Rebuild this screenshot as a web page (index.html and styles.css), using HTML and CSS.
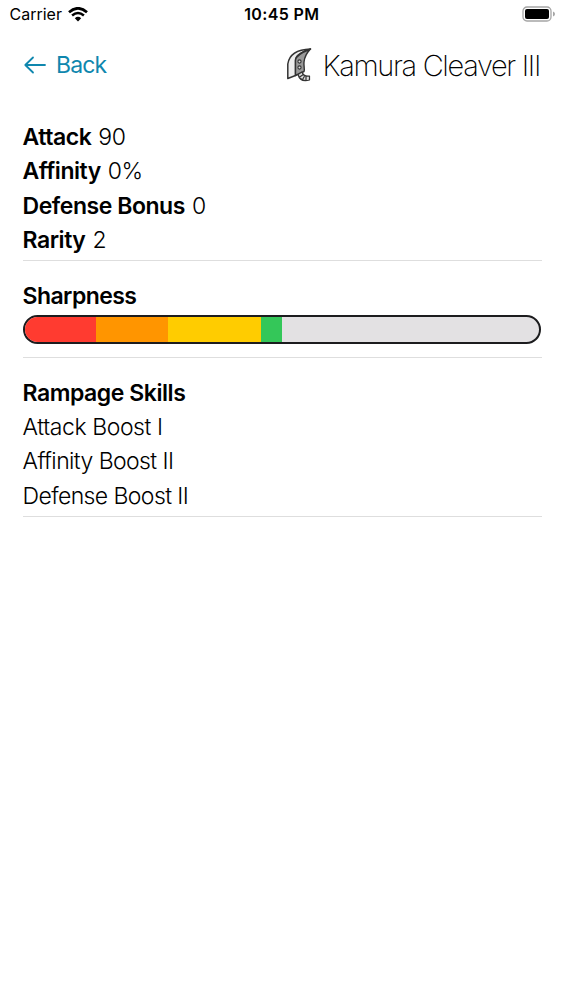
FILE: index.html
```html
<!DOCTYPE html>
<html lang="en">
<head>
  <meta charset="UTF-8">
  <meta name="viewport" content="width=device-width, initial-scale=1.0">
  <title>Kamura Cleaver III</title>
  <link rel="stylesheet" href="styles.css">
</head>
<body>
  <div class="status-bar">
    <div class="carrier">
      <span>Carrier</span>
      <svg class="wifi" width="20" height="15" viewBox="0 0 20 15">
        <path d="M1 5.2 Q10 -2.6 19 5.2" fill="none" stroke="#000" stroke-width="2.7"/>
        <path d="M4.1 8.5 Q10 3.4 15.9 8.5" fill="none" stroke="#000" stroke-width="2.5"/>
        <path d="M6.8 11.3 Q10 8.4 13.2 11.3 L10 14.5 Z" fill="#000"/>
      </svg>
    </div>
    <span class="time">10:45 PM</span>
    <svg class="battery" width="34" height="16" viewBox="0 0 34 16">
      <rect x="1" y="1" width="28" height="14" rx="4" fill="#fff" stroke="#a5a5a5" stroke-width="1.3"/>
      <rect x="3" y="3" width="24" height="10" rx="2" fill="#000"/>
      <path d="M31 5.5 Q33 6.2 33 8 Q33 9.8 31 10.5 Z" fill="#a5a5a5"/>
    </svg>
  </div>

  <header>
    <a class="back" href="#">
      <svg width="22" height="18" viewBox="0 0 22 18" fill="none" stroke="#0f87ae" stroke-width="1.8" stroke-linecap="round" stroke-linejoin="round">
        <path d="M9 1.5 L1.3 9 L9 16.5 M1.3 9 H21"/>
      </svg>
      <span>Back</span>
    </a>
    <div class="title">
      <svg width="28" height="36" viewBox="0 0 28 36" stroke="#333" stroke-linejoin="round">
        <path d="M1.8 31.5 V17 C3 9 9 2.5 24.5 2 C18 4 9 8 9.5 14 V28.5 Z" fill="#eee" stroke-width="1.5"/>
        <path d="M24.5 2 C17 5 10 8 9.5 13 V28.5 L18 24.5 C19 22 17.5 19 18 15 C18.5 10 20.5 6 24.5 2 Z" fill="#999" stroke-width="1.4"/>
        <circle cx="13.5" cy="14.5" r="1.6" fill="#ddd" stroke-width="1.1"/>
        <circle cx="13.5" cy="20.5" r="1.6" fill="#ddd" stroke-width="1.1"/>
        <path d="M12 27.5 L16 25 C17 28.5 19 29.5 23.5 29 V33 C18 34.5 13.5 33 12 27.5 Z M13.3 30.3 L17 27.8 M16.2 33 L18.5 29.3 M20 33.6 V29.4" fill="#ddd" stroke-width="1.2"/>
      </svg>
      <h1>Kamura Cleaver III</h1>
    </div>
  </header>

  <main>
    <section class="stats">
      <p><b>Attack</b> <span>90</span></p>
      <p><b>Affinity</b> <span>0%</span></p>
      <p><b>Defense Bonus</b> <span>0</span></p>
      <p><b>Rarity</b> <span>2</span></p>
    </section>

    <section class="sharpness">
      <h2>Sharpness</h2>
      <div class="bar">
        <div class="red"></div>
        <div class="orange"></div>
        <div class="yellow"></div>
        <div class="green"></div>
      </div>
    </section>

    <section class="skills">
      <h2>Rampage Skills</h2>
      <p>Attack Boost I</p>
      <p>Affinity Boost II</p>
      <p>Defense Boost II</p>
    </section>
  </main>
</body>
</html>
```
FILE: styles.css
```css
* {
  box-sizing: border-box;
}

body {
  font-family: Inter, "Liberation Sans", sans-serif;
  margin: 0;
  background-color: #fff;
  color: #000;
}

h1,
h2,
p {
  margin: 0;
}

.status-bar {
  display: grid;
  grid-template-columns: 1fr auto 1fr;
  align-items: center;
  height: 28px;
  padding: 0 7px 0 9.5px;
  font-size: 16px;
}

.carrier {
  display: flex;
  align-items: center;
  gap: 6px;
}

.time {
  font-weight: 600;
  letter-spacing: 0.35px;
  margin-right: 2px;
}

.battery {
  justify-self: end;
}

header {
  display: flex;
  justify-content: space-between;
  align-items: center;
  height: 74px;
  padding: 0 23px 0 24px;
}

.back {
  display: flex;
  align-items: center;
  gap: 10px;
  color: #0f87ae;
  font-size: 23px;
  letter-spacing: -0.9px;
  text-decoration: none;
}

.title {
  display: flex;
  align-items: center;
  gap: 8px;
}

h1 {
  font-size: 29px;
  font-weight: 200;
  letter-spacing: -1.33px;
}

main {
  padding: 18px 21px 0 22.5px;
}

section {
  border-bottom: 1px solid #dedede;
}

h2,
p {
  font-size: 23px;
  line-height: 34.4px;
  letter-spacing: -0.45px;
}

p {
  font-weight: 300;
}

h2,
b {
  font-weight: 600;
}

.stats {
  padding-bottom: 2.5px;
}

.stats span {
  margin-left: 1px;
}

.sharpness {
  padding: 18px 0 13px;
}

.sharpness h2 {
  letter-spacing: -0.55px;
}

.bar {
  display: flex;
  width: 518px;
  height: 29px;
  margin-top: 1px;
  border: 2px solid #1c1c1e;
  border-radius: 15px;
  background-color: #e3e1e3;
  overflow: hidden;
}

.red {
  width: 71.5px;
  background-color: #ff3b30;
}

.orange {
  width: 72px;
  background-color: #ff9500;
}

.yellow {
  width: 93px;
  background-color: #ffcc00;
}

.green {
  width: 21px;
  background-color: #34c759;
}

.skills {
  padding: 18px 0 3px;
}

.skills p {
  letter-spacing: -0.6px;
}

.skills h2 + p {
  letter-spacing: -0.42px;
}
```
